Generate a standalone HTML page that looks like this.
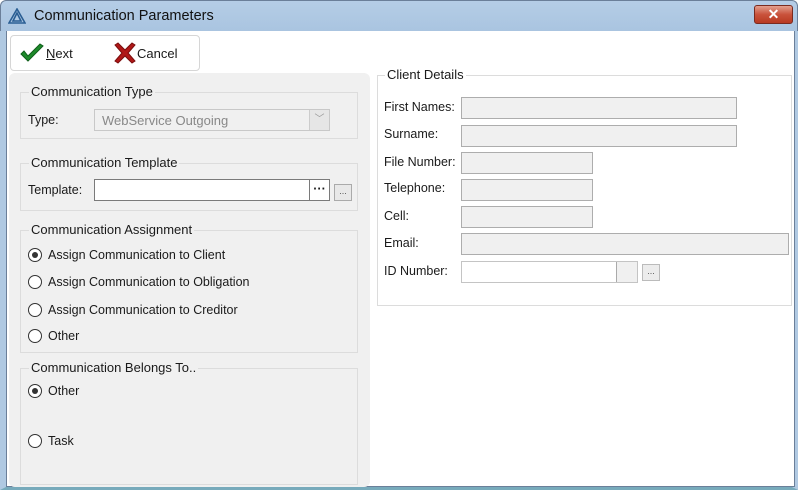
<!DOCTYPE html>
<html><head><style>
*{box-sizing:border-box;margin:0;padding:0}
body{width:801px;height:496px;background:#fff;font-family:"Liberation Sans",sans-serif;font-size:12.5px;color:#1a1a1a;position:relative;overflow:hidden}
.a{position:absolute}
.title{left:0;top:0;width:798px;height:32px;background:linear-gradient(#b5cde6,#a9c4e0);border:1px solid #6b7f99;border-bottom:none;border-radius:6px 6px 0 0}
.frame{left:0;top:31px;width:798px;height:459px;border:6px solid #b0c9e2;border-top:none;border-bottom:3px solid #7ab;}
.inner{left:6px;top:31px;width:789px;height:456px;background:#fff;border:1px solid #6b7f99;border-top:none}
.fs{position:absolute;border:1px solid #dcdcdc}
.lg{position:absolute;top:-9px;left:8px;background:#f0f0f0;padding:0 2px;font-size:13px}
.inp{position:absolute;height:22px;background:#f0f0f0;border:1px solid #adadad}
.lbl{position:absolute;font-size:12.5px}
.rad{position:absolute;width:14px;height:14px;border:1px solid #333;border-radius:50%;background:#fff}
.rad.on::after{content:"";position:absolute;left:3px;top:3px;width:6px;height:6px;border-radius:50%;background:#333}
</style></head><body>
<div class="a title"></div>
<div class="a frame"></div>
<div class="a inner"></div>
<svg class="a" style="left:8px;top:8px" width="18" height="16" viewBox="0 0 18 16"><path d="M9 1L1 15H17Z M9 5L5 13H13Z" fill="none" stroke="#2a5e93" stroke-width="1.6"/></svg>
<div class="a" style="left:34px;top:8px;font-size:14.5px;color:#111">Communication Parameters</div>
<div class="a" style="left:754px;top:5px;width:39px;height:19px;border-radius:3px;border:1px solid #7a2b20;background:linear-gradient(#e3a08f,#c9523b 50%,#b83a22);color:#fff;font-weight:bold;text-align:center;font-size:14px;line-height:17px">✕</div>

<div class="a" style="left:10px;top:35px;width:190px;height:36px;border:1px solid #d6d6d6;border-radius:4px;background:#fff"></div>
<svg class="a" style="left:19px;top:43px" width="26" height="20" viewBox="0 0 26 20"><path d="M2 11L9 18L24 3L21 1L9 13L5 8Z" fill="#1d8a2a" stroke="#0f5e1a" stroke-width="1"/></svg>
<div class="a" style="left:46px;top:46px;font-size:13px"><u>N</u>ext</div>
<svg class="a" style="left:113px;top:42px" width="24" height="22" viewBox="0 0 24 22"><path d="M2 3L5 1L12 8L19 1L22 3L15 11L22 19L19 21L12 14L5 21L2 19L9 11Z" fill="#b01818" stroke="#7a0d0d" stroke-width="1"/></svg>
<div class="a" style="left:137px;top:46px;font-size:13px">Cancel</div>

<div class="a" style="left:9px;top:73px;width:361px;height:414px;background:#f0f0f0;border-radius:6px"></div>
<div class="fs" style="left:20px;top:92px;width:338px;height:47px"><div class="lg">Communication Type</div></div>
<div class="lbl" style="left:28px;top:113px">Type:</div>
<div class="a" style="left:94px;top:109px;width:236px;height:22px;border:1px solid #c8c8c8;background:#f0f0f0;color:#888;padding:3px 7px;font-size:13px">WebService Outgoing</div>
<div class="a" style="left:309px;top:110px;width:20px;height:20px;background:#e6e6e6;border-left:1px solid #ccc;color:#999;text-align:center;font-size:10px;line-height:20px">﹀</div>

<div class="fs" style="left:20px;top:163px;width:338px;height:48px"><div class="lg">Communication Template</div></div>
<div class="lbl" style="left:28px;top:183px">Template:</div>
<div class="a" style="left:94px;top:179px;width:216px;height:22px;border:1px solid #7a7a7a;background:#fff"></div>
<div class="a" style="left:309px;top:179px;width:21px;height:22px;border:1px solid #7a7a7a;background:#fff;text-align:center;font-weight:bold;line-height:18px">···</div>
<div class="a" style="left:334px;top:184px;width:18px;height:17px;border:1px solid #aaa;background:#e8e8e8;font-size:9px;text-align:center;line-height:12px;color:#555">...</div>

<div class="fs" style="left:20px;top:230px;width:338px;height:123px"><div class="lg">Communication Assignment</div></div>
<div class="rad on" style="left:28px;top:248px"></div><div class="lbl" style="left:48px;top:248px">Assign Communication to Client</div>
<div class="rad" style="left:28px;top:275px"></div><div class="lbl" style="left:48px;top:275px">Assign Communication to Obligation</div>
<div class="rad" style="left:28px;top:303px"></div><div class="lbl" style="left:48px;top:303px">Assign Communication to Creditor</div>
<div class="rad" style="left:28px;top:329px"></div><div class="lbl" style="left:48px;top:329px">Other</div>

<div class="fs" style="left:20px;top:368px;width:338px;height:117px"><div class="lg">Communication Belongs To..</div></div>
<div class="rad on" style="left:28px;top:384px"></div><div class="lbl" style="left:48px;top:384px">Other</div>
<div class="rad" style="left:28px;top:434px"></div><div class="lbl" style="left:48px;top:434px">Task</div>

<div class="fs" style="left:377px;top:75px;width:415px;height:231px;background:#fff"><div class="lg" style="background:#fff;left:7px">Client Details</div></div>
<div class="lbl" style="left:384px;top:100px">First Names:</div><div class="inp" style="left:461px;top:97px;width:276px"></div>
<div class="lbl" style="left:384px;top:127px">Surname:</div><div class="inp" style="left:461px;top:125px;width:276px"></div>
<div class="lbl" style="left:384px;top:155px">File Number:</div><div class="inp" style="left:461px;top:152px;width:132px"></div>
<div class="lbl" style="left:384px;top:181px">Telephone:</div><div class="inp" style="left:461px;top:179px;width:132px"></div>
<div class="lbl" style="left:384px;top:209px">Cell:</div><div class="inp" style="left:461px;top:206px;width:132px"></div>
<div class="lbl" style="left:384px;top:236px">Email:</div><div class="inp" style="left:461px;top:233px;width:328px"></div>
<div class="lbl" style="left:384px;top:264px">ID Number:</div>
<div class="a" style="left:461px;top:261px;width:177px;height:22px;border:1px solid #c4c4c4;background:#fff"></div>
<div class="a" style="left:616px;top:262px;width:21px;height:20px;border-left:1px solid #aaa;background:#f0f0f0"></div>
<div class="a" style="left:642px;top:264px;width:18px;height:17px;border:1px solid #bbb;background:#ececec;font-size:9px;text-align:center;line-height:12px;color:#555">...</div>
</body></html>
